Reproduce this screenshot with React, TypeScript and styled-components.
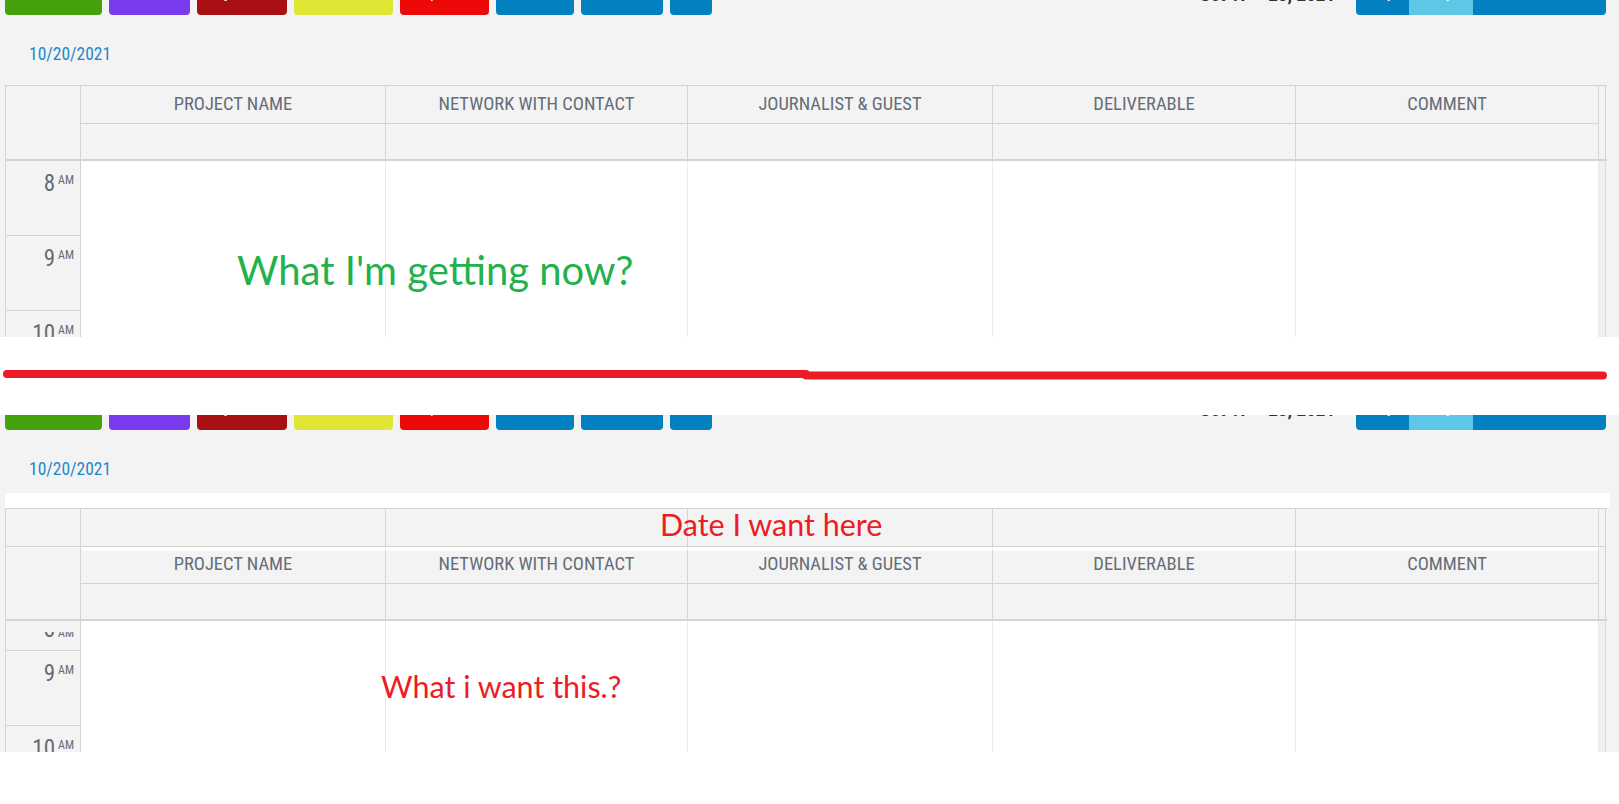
import React from "react";
import styled, { createGlobalStyle } from "styled-components";

const GlobalStyle = createGlobalStyle`
  html, body { margin: 0; padding: 0; background: #ffffff; }
  body { font-family: Roboto, "Liberation Sans", sans-serif; }
`;

const UI_FONT = `"Roboto Condensed", Roboto, "Liberation Sans", sans-serif`;
const NOTE_FONT = `Lato, "Open Sans", "Liberation Sans", sans-serif`;
const TRACKS = "75px 305px 302px 305px 303px 303px 7px";
const LINE = "#d4d4d4";

const Page = styled.div`
  width: 1619px;
  height: 804px;
  overflow: hidden;
  background: #ffffff;
  display: flex;
  flex-direction: column;
`;

const Shot = styled.section`
  position: relative;
  flex: none;
  height: 337px;
  overflow: hidden;
  background: #f3f3f3;
  font-family: ${UI_FONT};
  font-stretch: condensed;
`;

/* ---------- toolbar ---------- */
const Toolbar = styled.div`
  display: flex;
  align-items: flex-start;
  justify-content: space-between;
  height: 36px;
  margin-top: -21px;
  padding: 0 13px 0 5px;
`;

const ButtonRow = styled.div`
  display: flex;
  gap: 7px;
`;

const ColorButton = styled.button<{ $bg: string; $w: number }>`
  width: ${(p) => p.$w}px;
  height: 36px;
  border: none;
  border-radius: 4px;
  background: ${(p) => p.$bg};
  color: #ffffff;
  font-family: Roboto, "Liberation Sans", sans-serif;
  font-size: 14px;
  line-height: 16px;
  padding: 0 0 8px;
`;

const RightSide = styled.div`
  display: flex;
  align-items: flex-start;
  gap: 21px;
`;

const RangeTitle = styled.h2`
  margin: 4px 0 0;
  font-family: ${UI_FONT};
  font-stretch: condensed;
  font-size: 19px;
  line-height: 24px;
  font-weight: 700;
  color: #333333;
`;

const SegGroup = styled.div`
  display: flex;
  height: 36px;
  border-radius: 4px;
  overflow: hidden;
`;

const SegButton = styled.button<{ $w: number; $active?: boolean }>`
  width: ${(p) => p.$w}px;
  height: 36px;
  border: none;
  padding: 0 0 8px;
  background: ${(p) => (p.$active ? "#5dc7e5" : "#0280bf")};
  color: #ffffff;
  font-family: Roboto, "Liberation Sans", sans-serif;
  font-size: 14px;
  line-height: 16px;
`;

/* ---------- date line ---------- */
const DateBar = styled.div`
  margin-top: 29px;
  padding-left: 29px;
  height: 20px;
  font-size: 17.5px;
  line-height: 20px;
  color: #1f88c8;
`;

/* ---------- calendar ---------- */
const PasteStrip = styled.div`
  margin: 14px 9px 0 5px;
  height: 15px;
  background: #ffffff;
`;

const Calendar = styled.div<{ $top: number }>`
  margin: ${(p) => p.$top}px 0 0 5px;
  width: 1601px;
  border-left: 1px solid ${LINE};
  border-top: 1px solid ${LINE};
`;

const DateRow = styled.div`
  display: grid;
  grid-template-columns: ${TRACKS};
`;

const DateCell = styled.div`
  height: 38px;
  box-sizing: border-box;
  background: #f3f3f3;
  border-right: 1px solid ${LINE};
  border-bottom: 1px solid ${LINE};
`;

const HeaderGrid = styled.div`
  display: grid;
  grid-template-columns: ${TRACKS};
  border-bottom: 2px solid ${LINE};
`;

const CornerCell = styled.div`
  grid-row: 1 / span 2;
  border-right: 1px solid ${LINE};
  background: #f3f3f3;
`;

const GutterHead = styled.div`
  grid-row: 1 / span 2;
  grid-column: 7;
  border-right: 1px solid ${LINE};
  background: #f3f3f3;
`;

const TitleCell = styled.div<{ $gap: number }>`
  box-sizing: border-box;
  height: ${(p) => (p.$gap ? 37 : 38)}px;
  border-top: ${(p) => p.$gap}px solid #ffffff;
  border-right: 1px solid ${LINE};
  border-bottom: 1px solid ${LINE};
  display: flex;
  align-items: flex-end;
  justify-content: center;
  padding-bottom: 10px;
  font-size: 18.5px;
  line-height: 18px;
  color: #656d78;
  text-transform: uppercase;
  white-space: nowrap;
`;

const AllDayCell = styled.div`
  box-sizing: border-box;
  height: 35px;
  grid-row: 2;
  border-right: 1px solid ${LINE};
`;

const BodyGrid = styled.div`
  display: grid;
  grid-template-columns: ${TRACKS};
  height: 320px;
`;

const TimeColumn = styled.div`
  border-right: 1px solid ${LINE};
  background: #f3f3f3;
`;

const Slot = styled.div<{ $h: number }>`
  box-sizing: border-box;
  height: ${(p) => p.$h}px;
  overflow: hidden;
  border-bottom: 1px solid ${LINE};
`;

const SlotLabel = styled.div`
  display: flex;
  justify-content: flex-end;
  align-items: flex-start;
  gap: 3px;
  padding: 11px 6px 0 0;
  color: #666c73;
`;

/* a slot whose label is mostly hidden: only its lowest pixels show */
const ClippedLabel = styled.div`
  display: flex;
  justify-content: flex-end;
  align-items: flex-end;
  gap: 3px;
  height: 6px;
  margin-top: 11px;
  padding-right: 6px;
  overflow: hidden;
  color: #666c73;
`;

const Hour = styled.span<{ $tight?: boolean }>`
  font-size: 23px;
  line-height: ${(p) => (p.$tight ? 17 : 24)}px;
`;

const Meridiem = styled.span<{ $tight?: boolean }>`
  font-size: 12px;
  line-height: ${(p) => (p.$tight ? 9 : 12)}px;
  margin-top: ${(p) => (p.$tight ? 0 : 2)}px;
`;

const DayColumn = styled.div`
  background: #ffffff;
  border-right: 1px solid #ebebeb;
`;

const GutterColumn = styled.div`
  background: #f0f0f0;
  border-right: 1px solid #dcdcdc;
`;

/* ---------- notes written on top ---------- */
const Note = styled.div<{ $color: string; $size: number; $x: number; $y: number }>`
  position: absolute;
  left: ${(p) => p.$x}px;
  top: ${(p) => p.$y}px;
  font-family: ${NOTE_FONT};
  font-stretch: normal;
  font-size: ${(p) => p.$size}px;
  line-height: 1;
  color: ${(p) => p.$color};
  white-space: nowrap;
`;

const Divider = styled.div`
  flex: none;
  height: 78px;
  background: #ffffff;
`;

/* ---------- data ---------- */
const filterButtons = [
  { label: "Interview", bg: "#45a20c", w: 97 },
  { label: "Event", bg: "#7a3aee", w: 81 },
  { label: "Dynamic", bg: "#a91013", w: 90 },
  { label: "Launch", bg: "#dfe634", w: 99 },
  { label: "Special", bg: "#ee0909", w: 89 },
  { label: "Filter", bg: "#0280bf", w: 78 },
  { label: "Refresh", bg: "#0280bf", w: 82 },
  { label: "Add", bg: "#0280bf", w: 42 },
];

const viewButtons = [
  { label: "day", w: 53 },
  { label: "Day", w: 64, active: true },
  { label: "week", w: 66 },
  { label: "month", w: 67 },
];

const columns = [
  "Project Name",
  "Network with Contact",
  "Journalist & Guest",
  "Deliverable",
  "Comment",
];

type SlotSpec = { hour: number; h: number; clipped?: boolean };

function Header() {
  return (
    <Toolbar>
      <ButtonRow>
        {filterButtons.map((b) => (
          <ColorButton key={b.label} $bg={b.bg} $w={b.w}>
            {b.label}
          </ColorButton>
        ))}
      </ButtonRow>
      <RightSide>
        <RangeTitle>Oct 17 – 23, 2021</RangeTitle>
        <SegGroup>
          {viewButtons.map((b) => (
            <SegButton key={b.label} $w={b.w} $active={b.active}>
              {b.label}
            </SegButton>
          ))}
        </SegGroup>
      </RightSide>
    </Toolbar>
  );
}

function Schedule({ dated, slots, top }: { dated: boolean; slots: SlotSpec[]; top: number }) {
  return (
    <Calendar $top={top}>
      {dated && (
        <DateRow>
          {Array.from({ length: 7 }).map((_, i) => (
            <DateCell key={i} />
          ))}
        </DateRow>
      )}
      <HeaderGrid>
        <CornerCell />
        {columns.map((c) => (
          <TitleCell key={c} $gap={dated ? 4 : 0}>
            {c}
          </TitleCell>
        ))}
        <GutterHead />
        {columns.map((c) => (
          <AllDayCell key={c + "-allday"} />
        ))}
      </HeaderGrid>
      <BodyGrid>
        <TimeColumn>
          {slots.map((s) => (
            <Slot key={s.hour} $h={s.h}>
              {s.clipped ? (
                <ClippedLabel>
                  <Hour $tight>{s.hour}</Hour>
                  <Meridiem $tight>AM</Meridiem>
                </ClippedLabel>
              ) : (
                <SlotLabel>
                  <Hour>{s.hour}</Hour>
                  <Meridiem>AM</Meridiem>
                </SlotLabel>
              )}
            </Slot>
          ))}
        </TimeColumn>
        {columns.map((c) => (
          <DayColumn key={c + "-body"} />
        ))}
        <GutterColumn />
      </BodyGrid>
    </Calendar>
  );
}

export default function App() {
  return (
    <>
      <GlobalStyle />
      <Page>
        <Shot>
          <Header />
          <DateBar>10/20/2021</DateBar>
          <Schedule
            dated={false}
            top={21}
            slots={[
              { hour: 8, h: 75 },
              { hour: 9, h: 75 },
              { hour: 10, h: 75 },
            ]}
          />
          <Note $color="#22b14c" $size={40} $x={237} $y={250}>
            What I'm getting now?
          </Note>
        </Shot>

        <Divider>
          <svg width="1619" height="78" viewBox="0 0 1619 78">
            <path
              d="M7 37 L806 37 M806 38.5 L1603 38.5"
              stroke="#ed1c24"
              strokeWidth="8"
              strokeLinecap="round"
              fill="none"
            />
          </svg>
        </Divider>

        <Shot>
          <Header />
          <DateBar>10/20/2021</DateBar>
          <PasteStrip />
          <Schedule
            dated
            top={0}
            slots={[
              { hour: 8, h: 30, clipped: true },
              { hour: 9, h: 75 },
              { hour: 10, h: 75 },
            ]}
          />
          <Note $color="#ed1c24" $size={30.5} $x={660} $y={94}>
            Date I want here
          </Note>
          <Note $color="#ed1c24" $size={30.5} $x={381} $y={256}>
            What i want this.?
          </Note>
        </Shot>
      </Page>
    </>
  );
}
